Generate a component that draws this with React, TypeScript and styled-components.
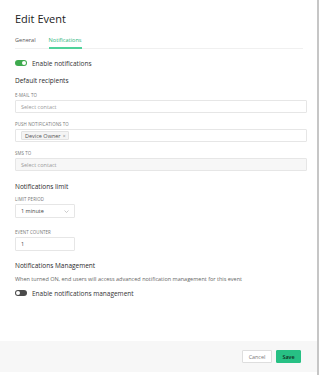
import React from "react";
import styled, { createGlobalStyle } from "styled-components";

const GlobalStyle = createGlobalStyle`
  html, body { margin: 0; padding: 0; background: #ffffff; }
  body { font-family: "Open Sans", "Noto Sans", sans-serif; color: #333; }
  * { box-sizing: border-box; }
`;

const Page = styled.div`
  width: 327px;
  height: 375px;
  display: flex;
  background: #fff;
`;

const Panel = styled.div`
  width: 319px;
  height: 375px;
  border-right: 2px solid #c6c6c6;
  display: flex;
  flex-direction: column;
  padding-bottom: 3px;
`;

const Content = styled.div`
  flex: 1;
  padding: 0 10px 0 15px;
  display: flex;
  flex-direction: column;
`;

const Title = styled.h1`
  margin: 12px 0 0;
  font-size: 11px;
  line-height: 14px;
  font-weight: 500;
  color: #222;
`;

const TabBar = styled.div`
  display: flex;
  gap: 13px;
  border-bottom: 1px solid #f0f0f0;
  margin-right: 4px;
`;

const Tab = styled.div<{ $active?: boolean }>`
  padding: 10px 0 3px;
  font-size: 5.6px;
  line-height: 8px;
  color: ${(p) => (p.$active ? "#2db57c" : "#555")};
  border-bottom: 2px solid ${(p) => (p.$active ? "#4fd29a" : "transparent")};
  margin-bottom: -1px;
`;

const ToggleRow = styled.div<{ $mt: number }>`
  display: flex;
  align-items: center;
  gap: 5px;
  height: 10px;
  margin-top: ${(p) => p.$mt}px;
  font-size: 6.5px;
  color: #333;
`;

const Toggle = styled.span<{ $on?: boolean }>`
  position: relative;
  width: 12px;
  height: 6px;
  border-radius: 3px;
  background: ${(p) => (p.$on ? "#3eaa4e" : "#4a4a4a")};
  flex-shrink: 0;
  &::after {
    content: "";
    position: absolute;
    top: 1px;
    left: ${(p) => (p.$on ? "7px" : "1px")};
    width: 4px;
    height: 4px;
    border-radius: 50%;
    background: #fff;
  }
`;

const Heading = styled.div<{ $mt: number }>`
  margin-top: ${(p) => p.$mt}px;
  font-size: 6.5px;
  line-height: 10px;
  font-weight: 500;
  color: #2a2a2a;
`;

const Label = styled.div<{ $mt: number }>`
  margin-top: ${(p) => p.$mt}px;
  font-size: 4.4px;
  line-height: 6px;
  text-transform: uppercase;
  color: #777;
  letter-spacing: 0.1px;
`;

const Field = styled.div<{ $disabled?: boolean; $width?: number; $h?: number }>`
  margin-top: 2px;
  height: ${(p) => p.$h ?? 13}px;
  width: ${(p) => (p.$width ? `${p.$width}px` : "auto")};
  border: 1px solid #e6e6e6;
  border-radius: 1px;
  background: ${(p) => (p.$disabled ? "#f7f7f7" : "#fff")};
  display: flex;
  align-items: center;
  padding: 0 5px;
  font-size: 5.5px;
  color: #444;
`;

const Placeholder = styled.span`
  color: #9a9a9a;
`;

const Chip = styled.span`
  display: inline-flex;
  align-items: center;
  gap: 2px;
  height: 9px;
  padding: 0 3px;
  border: 1px solid #e2e2e2;
  background: #f4f4f4;
  border-radius: 1px;
  font-size: 5.5px;
  color: #555;
`;

const ChipX = styled.span`
  color: #888;
  font-size: 5px;
`;

const SelectField = styled(Field)`
  justify-content: space-between;
`;

const Description = styled.div`
  margin-top: 4px;
  font-size: 5.5px;
  line-height: 8px;
  color: #666;
`;

const Footer = styled.div`
  height: 31px;
  background: #f7f7f7;
  display: flex;
  align-items: center;
  justify-content: flex-end;
  gap: 4px;
  padding: 0 16px 0 0;
`;

const Button = styled.button<{ $primary?: boolean; $w: number }>`
  width: ${(p) => p.$w}px;
  height: 13px;
  padding: 0;
  border-radius: 1px;
  font-family: inherit;
  font-size: 5.4px;
  font-weight: ${(p) => (p.$primary ? 600 : 400)};
  border: 1px solid ${(p) => (p.$primary ? "#27c084" : "#dedede")};
  background: ${(p) => (p.$primary ? "#27c084" : "#fff")};
  color: ${(p) => (p.$primary ? "#0f2a1d" : "#777")};
`;

export default function App() {
  return (
    <>
      <GlobalStyle />
      <Page>
        <Panel>
          <Content>
            <Title>Edit Event</Title>
            <TabBar>
              <Tab>General</Tab>
              <Tab $active>Notifications</Tab>
            </TabBar>
            <ToggleRow $mt={9}>
              <Toggle $on />
              Enable notifications
            </ToggleRow>
            <Heading $mt={8}>Default recipients</Heading>
            <Label $mt={6}>E-mail to</Label>
            <Field>
              <Placeholder>Select contact</Placeholder>
            </Field>
            <Label $mt={8}>Push notifications to</Label>
            <Field>
              <Chip>
                Device Owner <ChipX>×</ChipX>
              </Chip>
            </Field>
            <Label $mt={8}>SMS to</Label>
            <Field $disabled>
              <Placeholder>Select contact</Placeholder>
            </Field>
            <Heading $mt={11}>Notifications limit</Heading>
            <Label $mt={4}>Limit period</Label>
            <SelectField $width={60} $h={14}>
              <span>1 minute</span>
              <svg width="5" height="3" viewBox="0 0 5 3">
                <path d="M0.5 0.5 L2.5 2.5 L4.5 0.5" fill="none" stroke="#aaa" strokeWidth="0.6" />
              </svg>
            </SelectField>
            <Label $mt={11}>Event counter</Label>
            <Field $width={60} $h={14}>1</Field>
            <Heading $mt={10}>Notifications Management</Heading>
            <Description>
              When turned ON, end users will access advanced notification management for this event
            </Description>
            <ToggleRow $mt={5}>
              <Toggle />
              Enable notifications management
            </ToggleRow>
          </Content>
          <Footer>
            <Button $w={30}>Cancel</Button>
            <Button $primary $w={25}>Save</Button>
          </Footer>
        </Panel>
      </Page>
    </>
  );
}
